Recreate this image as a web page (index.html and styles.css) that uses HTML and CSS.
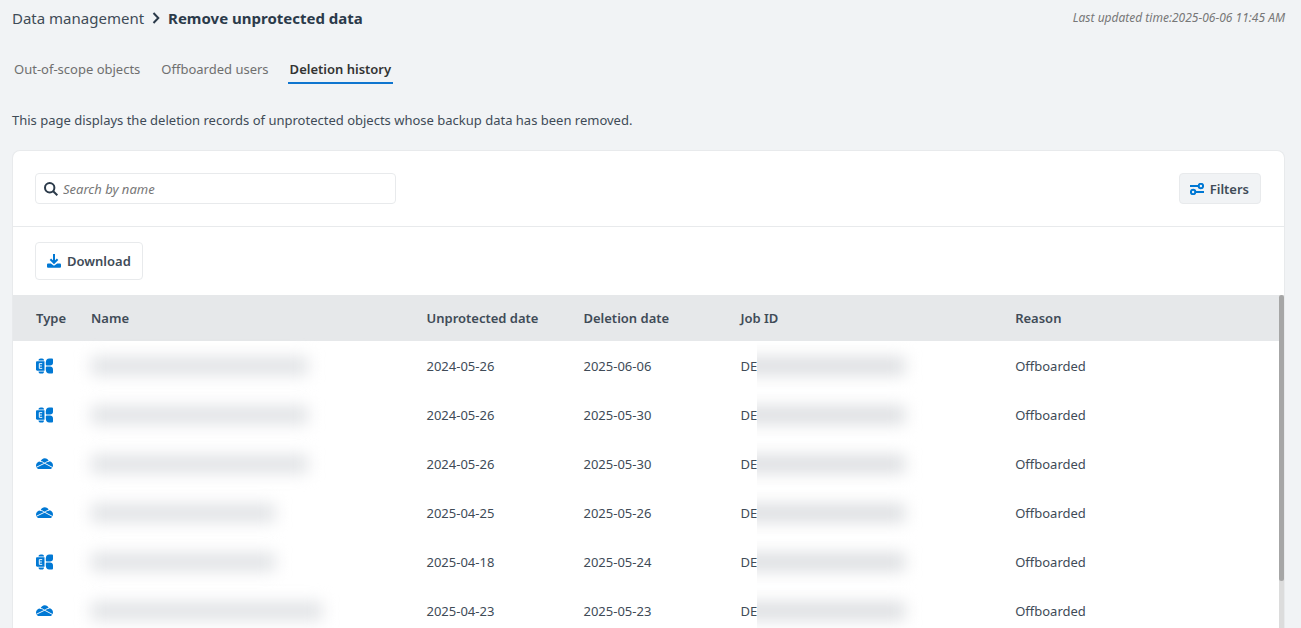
FILE: index.html
```html
<!DOCTYPE html>
<html lang="en">
<head>
    <meta charset="UTF-8">
    <meta name="viewport" content="width=device-width, initial-scale=1.0">
    <title>Remove unprotected data</title>
    <link rel="stylesheet" href="styles.css">
</head>
<body>
    <!-- Icons used more than once -->
    <svg class="icon-defs" aria-hidden="true">
        <symbol id="icon-exchange" viewBox="0 0 18 16">
            <path d="M2.600 2.200C2.600 1 3.600 0 5 0h1.500c1.200 0 2 1 2 2.200zM2.600 13.800h5.900c0 1.300-.8 2.200-2 2.200H5c-1.400 0-2.400-1-2.400-2.200z"/>
            <path d="M1.200 3H9v10H1.200C.5 13 0 12.500 0 11.800V4.200C0 3.500.5 3 1.200 3z"/>
            <path d="M14 0h3c.6 0 1 .4 1 1v3.500c0 1.800-1.300 2.900-3 2.900h-3.600c-.6 0-1-.4-1-1V4C10.400 1.600 11.800 0 14 0z"/>
            <path d="M11.400 8.500H15c1.700 0 3 1.200 3 3V15c0 .6-.4 1-1 1h-3c-2.200 0-3.600-1.600-3.600-4V9.500c0-.6.400-1 1-1z"/>
            <path class="icon-cut" d="M6.600 5.500H3.500v5h3.100M3.500 8h2.800"/>
        </symbol>
        <symbol id="icon-onedrive" viewBox="0 0 18 12">
            <path d="M4.700 3.400C5.500 1.400 7.200 0 9.200 0c2 0 3.700 1.100 4.400 3 2.600 0 4.400 1.800 4.400 4.200 0 2.500-1.500 4.200-3.600 4.200H4C1.600 11.400 0 9.900 0 7.500c0-2.300 2-4.200 4.700-4.100z"/>
            <path class="icon-cut" d="M4.300 3.300c1.700-.1 3.100.7 4.800 1.900L17.800 9.800M.5 9.400L9.100 5.200c1.500-1.100 3-2 4.800-2.100"/>
        </symbol>
    </svg>

    <header class="page-header">
        <nav class="breadcrumb" aria-label="Breadcrumb">
            <a href="#">Data management</a>
            <svg class="chevron" viewBox="0 0 8 12" aria-hidden="true"><path d="M1.500 1l4.800 5-4.800 5"/></svg>
            <h1>Remove unprotected data</h1>
        </nav>
        <p class="last-updated">Last updated time:2025-06-06 11:45 AM</p>
    </header>

    <nav class="tabs" aria-label="Views">
        <a href="#">Out-of-scope objects</a>
        <a href="#">Offboarded users</a>
        <a href="#" class="active" aria-current="page">Deletion history</a>
    </nav>

    <p class="description">This page displays the deletion records of unprotected objects whose backup data has been removed.</p>

    <main class="card">
        <div class="search-bar">
            <label class="search-box">
                <svg class="search-icon" viewBox="0 0 14 14" aria-hidden="true"><circle cx="5.700" cy="5.700" r="4.700"/><path d="M9.200 9.200l4.100 4.100"/></svg>
                <input type="search" placeholder="Search by name" aria-label="Search by name">
            </label>
            <button type="button" class="btn btn-filters">
                <svg class="filters-icon" viewBox="0 0 14 12" aria-hidden="true"><path d="M0 3h8.500M5.500 9H14"/><circle cx="10.900" cy="3" r="2.200"/><circle cx="3.100" cy="9" r="2.200"/></svg>
                Filters
            </button>
        </div>

        <div class="actions">
            <button type="button" class="btn btn-download">
                <svg class="download-icon" viewBox="0 0 14 14" aria-hidden="true"><path class="arrow" d="M7 0v8.500M3.400 5.200L7 8.800l3.600-3.600"/><path d="M1.300 9.500h2.500L7 11.700l3.200-2.200h2.500c.8 0 1.300.5 1.300 1.300v1.700c0 .8-.5 1.300-1.300 1.300H1.300C.5 13.800 0 13.300 0 12.500v-1.700c0-.8.500-1.300 1.300-1.300z"/></svg>
                Download
            </button>
        </div>

        <div class="table-area">
            <div class="table-wrap">
                <table>
                    <colgroup>
                        <col class="col-type">
                        <col class="col-name">
                        <col class="col-date">
                        <col class="col-date">
                        <col class="col-job">
                        <col>
                    </colgroup>
                    <thead>
                        <tr>
                            <th>Type</th>
                            <th>Name</th>
                            <th>Unprotected date</th>
                            <th>Deletion date</th>
                            <th>Job ID</th>
                            <th>Reason</th>
                        </tr>
                    </thead>
                    <tbody>
                        <tr>
                            <td><svg class="type-icon" role="img" aria-label="Exchange"><use href="#icon-exchange"/></svg></td>
                            <td><span class="masked masked-medium"></span></td>
                            <td>2024-05-26</td>
                            <td>2025-06-06</td>
                            <td><div class="job-id">DE<span class="masked-job"></span></div></td>
                            <td>Offboarded</td>
                        </tr>
                        <tr>
                            <td><svg class="type-icon" role="img" aria-label="Exchange"><use href="#icon-exchange"/></svg></td>
                            <td><span class="masked masked-medium"></span></td>
                            <td>2024-05-26</td>
                            <td>2025-05-30</td>
                            <td><div class="job-id">DE<span class="masked-job"></span></div></td>
                            <td>Offboarded</td>
                        </tr>
                        <tr>
                            <td><svg class="type-icon" role="img" aria-label="OneDrive"><use href="#icon-onedrive"/></svg></td>
                            <td><span class="masked masked-medium"></span></td>
                            <td>2024-05-26</td>
                            <td>2025-05-30</td>
                            <td><div class="job-id">DE<span class="masked-job"></span></div></td>
                            <td>Offboarded</td>
                        </tr>
                        <tr>
                            <td><svg class="type-icon" role="img" aria-label="OneDrive"><use href="#icon-onedrive"/></svg></td>
                            <td><span class="masked masked-short"></span></td>
                            <td>2025-04-25</td>
                            <td>2025-05-26</td>
                            <td><div class="job-id">DE<span class="masked-job"></span></div></td>
                            <td>Offboarded</td>
                        </tr>
                        <tr>
                            <td><svg class="type-icon" role="img" aria-label="Exchange"><use href="#icon-exchange"/></svg></td>
                            <td><span class="masked masked-short"></span></td>
                            <td>2025-04-18</td>
                            <td>2025-05-24</td>
                            <td><div class="job-id">DE<span class="masked-job"></span></div></td>
                            <td>Offboarded</td>
                        </tr>
                        <tr>
                            <td><svg class="type-icon" role="img" aria-label="OneDrive"><use href="#icon-onedrive"/></svg></td>
                            <td><span class="masked masked-long"></span></td>
                            <td>2025-04-23</td>
                            <td>2025-05-23</td>
                            <td><div class="job-id">DE<span class="masked-job"></span></div></td>
                            <td>Offboarded</td>
                        </tr>
                    </tbody>
                </table>
            </div>
            <div class="scroll-track"><div class="scroll-thumb"></div></div>
        </div>
    </main>
</body>
</html>
```

FILE: styles.css
```css
* {
    box-sizing: border-box;
}

body {
    margin: 0;
    padding: 0 16px 0 12px;
    height: 100vh;
    overflow: hidden;
    display: flex;
    flex-direction: column;
    background-color: #f1f3f5;
    color: #404b57;
    font-family: "Noto Sans", "Open Sans", sans-serif;
    font-size: 13px;
    line-height: 20px;
}

h1,
p {
    margin: 0;
}

a {
    color: inherit;
    text-decoration: none;
}

.icon-defs {
    position: absolute;
    width: 0;
    height: 0;
}

/* Header */
.page-header {
    display: flex;
    justify-content: space-between;
    align-items: center;
    padding-top: 8px;
}

.breadcrumb {
    display: flex;
    align-items: center;
    gap: 8px;
    font-size: 15px;
}

.breadcrumb h1 {
    font-size: 15px;
    font-weight: 700;
    line-height: 20px;
    color: #2b3a4a;
}

.chevron {
    width: 8px;
    height: 12px;
    fill: none;
    stroke: #2b3a4a;
    stroke-width: 2;
}

.last-updated {
    font-size: 12px;
    font-style: italic;
    color: #777;
}

/* Tabs */
.tabs {
    display: flex;
    gap: 17px;
    margin-top: 31px;
}

.tabs a {
    padding: 0 2px 3px;
    border-bottom: 2px solid transparent;
    color: #6f6f6f;
}

.tabs .active {
    border-bottom-color: #0f75cf;
    color: #333;
    font-weight: 600;
}

.description {
    margin-top: 26px;
}

/* Card */
.card {
    flex: 1;
    min-height: 0;
    display: flex;
    flex-direction: column;
    margin-top: 20px;
    overflow: hidden;
    background-color: #fff;
    border: 1px solid #e8eaec;
    border-bottom: 0;
    border-radius: 8px 8px 0 0;
}

.search-bar {
    display: flex;
    justify-content: space-between;
    padding: 22px 23px 22px 22px;
    border-bottom: 1px solid #e8eaec;
}

.search-box {
    display: flex;
    align-items: center;
    gap: 5px;
    width: 361px;
    height: 31px;
    padding: 0 8px;
    border: 1px solid #e8eaec;
    border-radius: 4px;
}

.search-box input {
    flex: 1;
    min-width: 0;
    padding: 0;
    border: 0;
    outline: 0;
    background: none;
    font: inherit;
}

.search-box input::placeholder {
    color: #777;
    font-style: italic;
}

.search-icon {
    width: 14px;
    height: 14px;
    fill: none;
    stroke: #2b3a4a;
    stroke-width: 2;
}

.btn {
    display: flex;
    align-items: center;
    gap: 6px;
    border: 1px solid #e8eaec;
    border-radius: 4px;
    background-color: #fff;
    color: #404b57;
    font: inherit;
    font-weight: 600;
}

.btn-filters {
    height: 31px;
    padding: 0 11px 0 10px;
    background-color: #f1f3f5;
}

.filters-icon {
    width: 14px;
    height: 12px;
    fill: none;
    stroke: #0078d4;
    stroke-width: 2;
}

.actions {
    padding: 15px 22px;
}

.btn-download {
    height: 38px;
    padding: 0 11px;
}

.download-icon {
    width: 14px;
    height: 14px;
    fill: #0078d4;
}

.download-icon .arrow {
    fill: none;
    stroke: #0078d4;
    stroke-width: 2;
}

/* Table */
.table-area {
    flex: 1;
    min-height: 0;
    display: flex;
}

.table-wrap {
    flex: 1;
    overflow: hidden;
}

table {
    width: 100%;
    table-layout: fixed;
    border-collapse: collapse;
}

.col-type {
    width: 78px;
}

.col-name {
    width: 26.5%;
}

.col-date {
    width: 12.4%;
}

.col-job {
    width: 21.7%;
}

th,
td {
    height: 49px;
    padding: 0;
    text-align: left;
    vertical-align: middle;
}

th {
    height: 46px;
    background-color: #e6e8ea;
    font-weight: 600;
}

th:first-child,
td:first-child {
    padding-left: 23px;
}

.type-icon {
    display: block;
    width: 17px;
    height: 16px;
    fill: #0078d4;
}

.icon-cut {
    fill: none;
    stroke: #fff;
    stroke-width: 1;
}

/* Hidden values */
.masked {
    display: block;
    height: 18px;
    background-color: #e0e2e5;
    filter: blur(8px);
}

.masked-short {
    width: 184px;
}

.masked-medium {
    width: 217px;
}

.masked-long {
    width: 231px;
}

.job-id {
    display: flex;
    align-items: center;
}

.masked-job {
    display: block;
    width: 170px;
    height: 48px;
    overflow: hidden;
}

.masked-job::before {
    content: "";
    display: block;
    width: 168px;
    height: 18px;
    margin: 15px 0 0 -20px;
    background-color: #dcdee1;
    filter: blur(8px);
}

.scroll-track {
    width: 5px;
    background-color: #dcdcdc;
}

.scroll-thumb {
    height: 86%;
    border-radius: 3px;
    background-color: #a6a6a6;
}
```
